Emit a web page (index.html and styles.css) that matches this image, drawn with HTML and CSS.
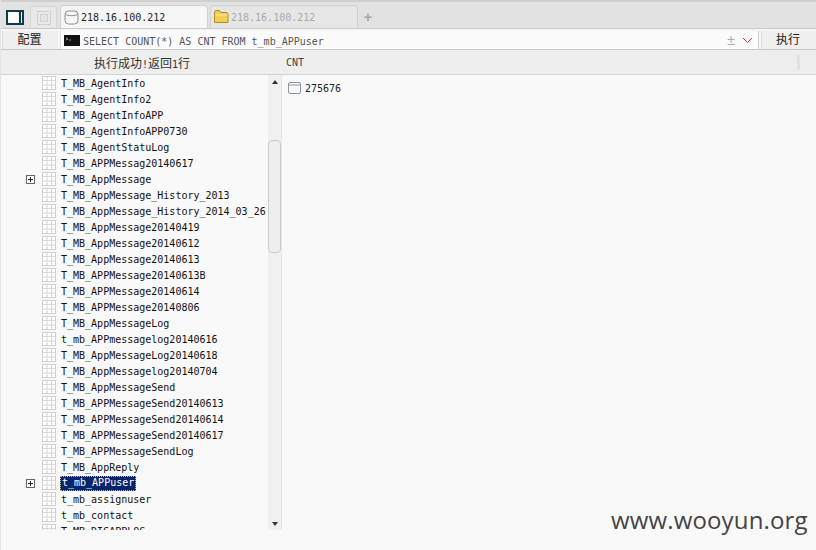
FILE: index.html
```html
<!DOCTYPE html>
<html lang="zh">
<head>
<meta charset="utf-8">
<title>SQL</title>
<link rel="stylesheet" href="styles.css">
</head>
<body>
<div class="app">
  <div class="tabbar">
    <div class="sq-btn"><svg width="18" height="15" viewBox="0 0 18 15"><rect x="1" y="1" width="16" height="13" fill="#fff" stroke="#0e3a4a" stroke-width="2"/><rect x="13" y="1" width="2" height="13" fill="#0e3a4a"/></svg></div>
    <div class="sq-btn dim"><svg width="14" height="14" viewBox="0 0 14 14"><rect x=".5" y=".5" width="13" height="13" fill="none" stroke="#c4c4c4" stroke-dasharray="2 1"/><rect x="3.500" y="3.500" width="7" height="7" fill="#e4e4e4" stroke="#d0d0d0"/></svg></div>
    <div class="tab active"><svg class="tab-icon" width="15" height="15" viewBox="0 0 15 15"><rect x="1" y="1" width="13" height="13" rx="3.500" fill="#f8f8f8" stroke="#8a8a8a"/><path d="M1.500 4.500c2 1.500 10 1.500 12 0" stroke="#8a8a8a" fill="none"/></svg><span>218.16.100.212</span></div>
    <div class="tab"><svg class="tab-icon" width="15" height="14" viewBox="0 0 15 14"><path d="M.5 2l1-1.500h4l1.500 2h6l1 1v9H.5z" fill="#f2cf4f" stroke="#a98f2a"/><path d="M1.500 5h12" stroke="#fbeaa0"/></svg><span>218.16.100.212</span></div>
    <div class="plus">+</div>
  </div>
  <div class="sqlbar">
    <div class="cfg">配置</div>
    <div class="sql">
      <svg width="16" height="11" viewBox="0 0 16 11"><rect width="16" height="11" fill="#111"/><path d="M2 3l2 1-2 1M5 5h2" stroke="#ccc" fill="none" stroke-width=".7"/></svg>
      <span class="sql-text">SELECT COUNT(*) AS CNT FROM t_mb_APPuser</span>
      <span class="pm">±</span>
      <svg class="chev" width="11" height="7" viewBox="0 0 11 7"><path d="M1 1l4.500 4.500L10 1" fill="none" stroke="#c8303a"/></svg>
    </div>
    <div class="run">执行</div>
  </div>
  <div class="headbar">
    <div class="status">执行成功<span class="half">!</span>返回<span class="half">1</span>行</div>
    <div class="col">CNT</div>
    <div class="grip"></div>
  </div>
  <div class="main">
    <div class="tree">
      <ul class="rows">
        <li class="row"><i class="exp"></i><svg class="tb"><use href="#t"/></svg><span>T_MB_AgentInfo</span></li>
        <li class="row"><i class="exp"></i><svg class="tb"><use href="#t"/></svg><span>T_MB_AgentInfo2</span></li>
        <li class="row"><i class="exp"></i><svg class="tb"><use href="#t"/></svg><span>T_MB_AgentInfoAPP</span></li>
        <li class="row"><i class="exp"></i><svg class="tb"><use href="#t"/></svg><span>T_MB_AgentInfoAPP0730</span></li>
        <li class="row"><i class="exp"></i><svg class="tb"><use href="#t"/></svg><span>T_MB_AgentStatuLog</span></li>
        <li class="row"><i class="exp"></i><svg class="tb"><use href="#t"/></svg><span>T_MB_APPMessag20140617</span></li>
        <li class="row"><i class="exp on"></i><svg class="tb"><use href="#t"/></svg><span>T_MB_AppMessage</span></li>
        <li class="row"><i class="exp"></i><svg class="tb"><use href="#t"/></svg><span>T_MB_AppMessage_History_2013</span></li>
        <li class="row"><i class="exp"></i><svg class="tb"><use href="#t"/></svg><span>T_MB_AppMessage_History_2014_03_26</span></li>
        <li class="row"><i class="exp"></i><svg class="tb"><use href="#t"/></svg><span>T_MB_AppMessage20140419</span></li>
        <li class="row"><i class="exp"></i><svg class="tb"><use href="#t"/></svg><span>T_MB_AppMessage20140612</span></li>
        <li class="row"><i class="exp"></i><svg class="tb"><use href="#t"/></svg><span>T_MB_AppMessage20140613</span></li>
        <li class="row"><i class="exp"></i><svg class="tb"><use href="#t"/></svg><span>T_MB_APPMessage20140613B</span></li>
        <li class="row"><i class="exp"></i><svg class="tb"><use href="#t"/></svg><span>T_MB_APPMessage20140614</span></li>
        <li class="row"><i class="exp"></i><svg class="tb"><use href="#t"/></svg><span>T_MB_APPMessage20140806</span></li>
        <li class="row"><i class="exp"></i><svg class="tb"><use href="#t"/></svg><span>T_MB_AppMessageLog</span></li>
        <li class="row"><i class="exp"></i><svg class="tb"><use href="#t"/></svg><span>t_mb_APPmessagelog20140616</span></li>
        <li class="row"><i class="exp"></i><svg class="tb"><use href="#t"/></svg><span>T_MB_AppMessageLog20140618</span></li>
        <li class="row"><i class="exp"></i><svg class="tb"><use href="#t"/></svg><span>T_MB_AppMessagelog20140704</span></li>
        <li class="row"><i class="exp"></i><svg class="tb"><use href="#t"/></svg><span>T_MB_AppMessageSend</span></li>
        <li class="row"><i class="exp"></i><svg class="tb"><use href="#t"/></svg><span>T_MB_APPMessageSend20140613</span></li>
        <li class="row"><i class="exp"></i><svg class="tb"><use href="#t"/></svg><span>T_MB_APPMessageSend20140614</span></li>
        <li class="row"><i class="exp"></i><svg class="tb"><use href="#t"/></svg><span>T_MB_APPMessageSend20140617</span></li>
        <li class="row"><i class="exp"></i><svg class="tb"><use href="#t"/></svg><span>T_MB_APPMessageSendLog</span></li>
        <li class="row"><i class="exp"></i><svg class="tb"><use href="#t"/></svg><span>T_MB_AppReply</span></li>
        <li class="row"><i class="exp on"></i><svg class="tb"><use href="#t"/></svg><span class="sel">t_mb_APPuser</span></li>
        <li class="row"><i class="exp"></i><svg class="tb"><use href="#t"/></svg><span>t_mb_assignuser</span></li>
        <li class="row"><i class="exp"></i><svg class="tb"><use href="#t"/></svg><span>t_mb_contact</span></li>
        <li class="row"><i class="exp"></i><svg class="tb"><use href="#t"/></svg><span>T_MB_DISAPPLOG</span></li>
      </ul>
      <div class="scroll">
        <span class="arrow up"></span>
        <span class="thumb"></span>
        <span class="arrow down"></span>
      </div>
    </div>
    <div class="result">
      <div class="cell">
        <svg width="13" height="12" viewBox="0 0 13 12"><rect x=".5" y=".5" width="12" height="11" rx="1.500" fill="#fafafa" stroke="#8d949c"/><path d="M.5 3h12" stroke="#8d949c"/></svg>
        <span>275676</span>
      </div>
    </div>
  </div>
  <div class="mark">www.wooyun.org</div>
</div>
<svg class="defs" width="0" height="0"><defs><g id="t"><rect x=".5" y=".5" width="13" height="13" fill="#fff" stroke="#cfcfcf"/><path d="M.5 4.500h13M.5 9h13M5 .5v13M9.500 .5v13" stroke="#d6d6d6" fill="none"/></g></defs></svg>
</body>
</html>
```
FILE: styles.css
```css
* { box-sizing: border-box; }
html, body { margin: 0; padding: 0; }
body { width: 816px; height: 550px; overflow: hidden; background: #f9f9f9; font-family: "DejaVu Sans Mono", "Noto Sans CJK SC", monospace; color: #222; }
.app { position: relative; width: 816px; height: 550px; display: flex; flex-direction: column; border-left: 1px solid #e4e4e4; }
.tabbar { height: 29px; flex: none; display: flex; align-items: flex-end; padding-left: 5px; background: #e1e2e1; border-top: 2px solid #cfd0cf; border-bottom: 1px solid #c8c9c8; }
.sq-btn { width: 18px; height: 15px; margin-right: 6px; margin-bottom: 3px; display: flex; align-items: center; justify-content: center; }
.sq-btn.dim { width: 27px; height: 22px; margin-right: 3px; margin-bottom: 0; background: #e9e9e9; border: 1px solid #d5d5d5; border-bottom: 0; border-radius: 2px 2px 0 0; }
.tab { width: 148px; height: 23px; display: flex; align-items: center; gap: 2px; padding-left: 3px; margin-right: 2px; font-size: 10px; color: #aaa; background: #e6e6e6; border: 1px solid #d0d0d0; border-bottom: 0; border-radius: 4px 4px 0 0; }
.tab.active { color: #222; background: #f6f6f6; }
.tab-icon { flex: none; }
.plus { width: 16px; height: 23px; text-align: center; font: bold 15px/23px "Liberation Sans", sans-serif; color: #aaa; }
.sqlbar { height: 21px; flex: none; padding-top: 2px; display: flex; background: #f6f6f6; border-bottom: 1px solid #c9c9c9; }
.cfg { width: 56px; margin-left: 1px; padding-right: 2px; text-align: center; font-size: 12px; line-height: 18px; background: #efefef; border-left: 1px solid #ddd; }
.sql { width: 699px; margin-left: 2px; display: flex; align-items: center; padding-left: 3px; background: #fbfbfb; border-left: 1px solid #ddd; border-right: 1px solid #d0d0d0; }
.sql-text { margin-left: 3px; padding-top: 2px; flex: 1; font-size: 10px; color: #555; white-space: nowrap; }
.pm { font: 14px/1 "Liberation Sans", sans-serif; color: #aaa; margin-right: 7px; }
.chev { margin-right: 5px; }
.run { flex: 1; margin-left: 2px; padding-right: 2px; text-align: center; font-size: 12px; line-height: 18px; background: #efefef; border-left: 1px solid #ddd; }
.headbar { height: 25px; flex: none; display: flex; align-items: center; background: #eeeeee; border-bottom: 1px solid #d2d2d2; }
.status { width: 281px; padding-left: 93px; font-size: 12px; color: #333; }
.half { font-size: 10px; }
.col { flex: 1; padding-left: 4px; font-size: 10px; color: #444; }
.grip { width: 3px; height: 15px; margin-right: 16px; background: #e2e2e2; }
.main { flex: none; height: 455px; display: flex; }
.tree { width: 281px; height: 455px; display: flex; background: #f9f9f9; }
.rows { flex: 1; height: 455px; margin: 0; padding: 0; list-style: none; overflow: hidden; }
.row { height: 16px; display: flex; align-items: center; font-size: 10px; color: #111; white-space: nowrap; }
.exp { flex: none; width: 9px; height: 9px; margin-left: 25px; margin-right: 7px; position: relative; }
.exp.on { border: 1px solid #666; background: #fff; }
.exp.on::before { content: ""; position: absolute; left: 1px; top: 3px; width: 5px; height: 1px; background: #222; }
.exp.on::after { content: ""; position: absolute; left: 3px; top: 1px; width: 1px; height: 5px; background: #222; }
.tb { flex: none; width: 14px; height: 14px; margin-right: 5px; }
.sel { height: 15px; line-height: 14px; background: #0a246a; color: #fff; outline: 1px dotted #d0c060; outline-offset: -1px; padding: 0 2px; margin-left: -1px; }
.scroll { flex: none; width: 14px; height: 455px; position: relative; background: #f0f0f0; border-right: 1px solid #e6e6e6; }
.arrow { position: absolute; left: 4px; width: 0; height: 0; border-left: 3px solid transparent; border-right: 3px solid transparent; }
.arrow.up { top: 5px; border-bottom: 4px solid #333; }
.arrow.down { bottom: 4px; border-top: 4px solid #333; }
.thumb { position: absolute; left: 0; top: 65px; width: 13px; height: 113px; background: #eeeeee; border: 1px solid #cccccc; border-radius: 4px; }
.result { flex: 1; padding: 7px 0 0 6px; background: #f9f9f9; }
.cell { display: flex; align-items: center; gap: 4px; font-size: 10px; color: #222; }
.mark { position: absolute; left: 610px; top: 505px; font: 24px/30px "Open Sans", sans-serif; letter-spacing: .15px; color: #444; }
.defs { position: absolute; }
```
